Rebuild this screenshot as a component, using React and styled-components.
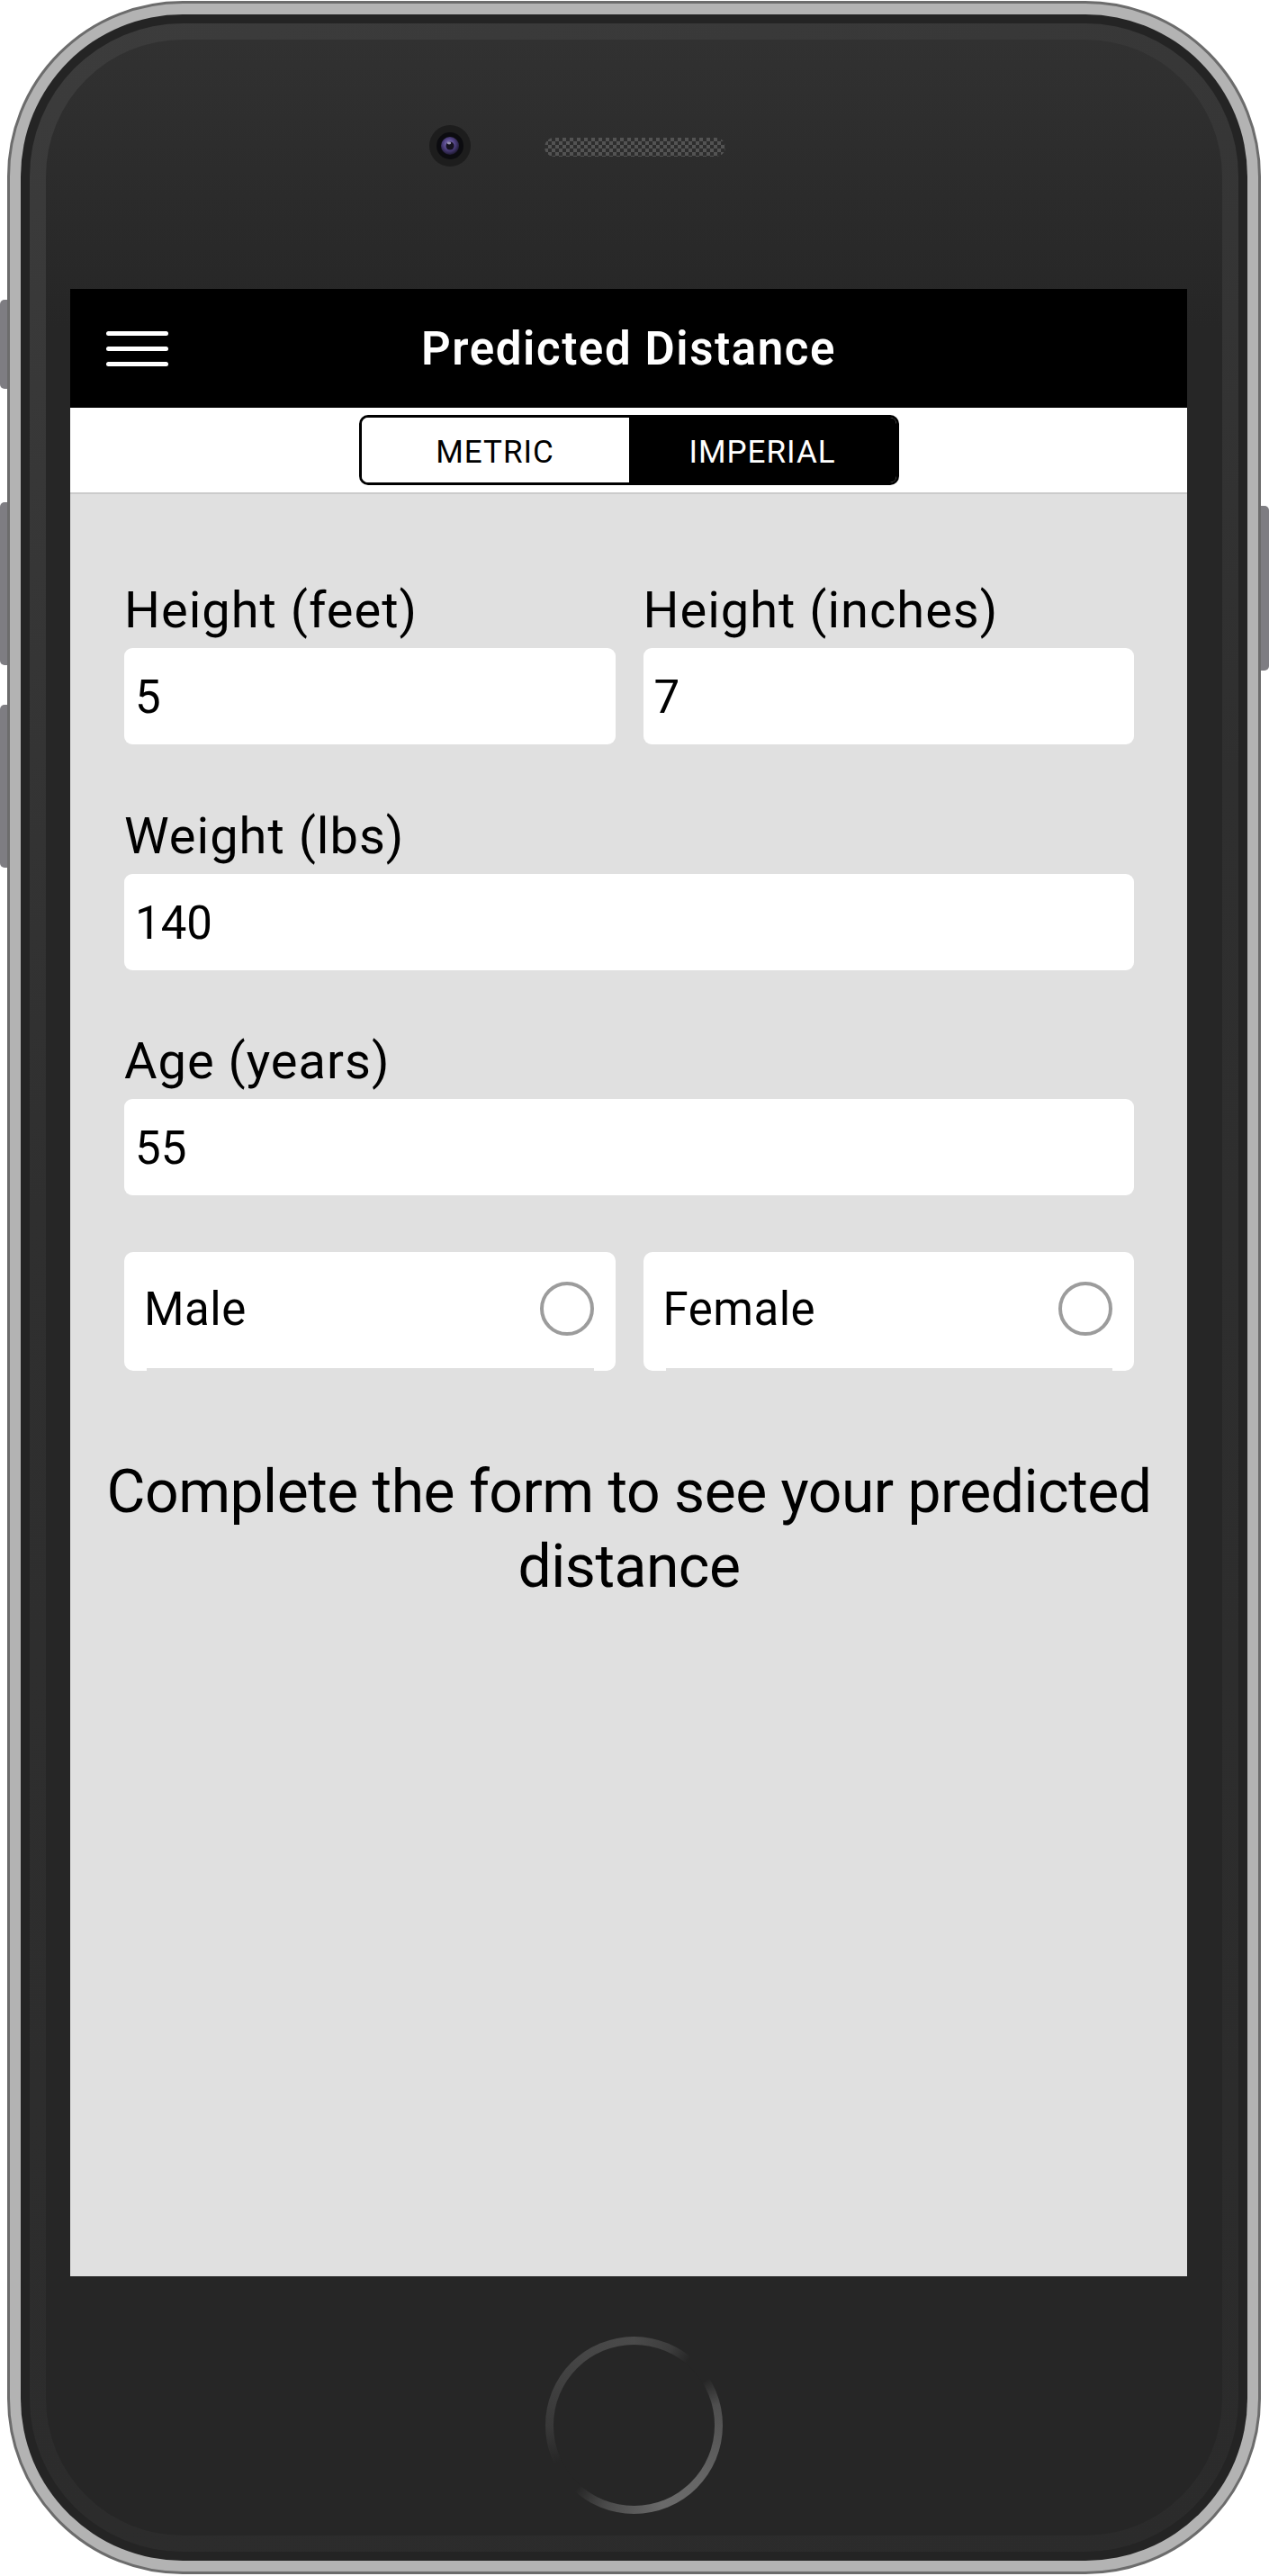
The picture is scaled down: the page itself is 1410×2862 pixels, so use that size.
import React, { useState } from 'react';
import styled, { createGlobalStyle } from 'styled-components';

const GlobalStyle = createGlobalStyle`
  html, body {
    margin: 0;
    padding: 0;
    background: #ffffff;
  }
  body {
    font-family: Roboto, "Liberation Sans", sans-serif;
  }
`;

const fieldRows = [
  {
    gap: 0,
    fields: [
      { label: 'Height (feet)', value: '5' },
      { label: 'Height (inches)', value: '7' },
    ],
  },
  { gap: 68, fields: [{ label: 'Weight (lbs)', value: '140' }] },
  { gap: 67, fields: [{ label: 'Age (years)', value: '55' }] },
];

function Camera() {
  return (
    <CameraSvg width="46" height="46" viewBox="0 0 46 46">
      <defs>
        <radialGradient id="lens" cx="45%" cy="40%" r="60%">
          <stop offset="0%" stopColor="#8a7bc0" />
          <stop offset="55%" stopColor="#4d3f7e" />
          <stop offset="100%" stopColor="#1f1a33" />
        </radialGradient>
      </defs>
      <circle cx="23" cy="23" r="23" fill="#1d1d1d" />
      <circle cx="23" cy="23" r="15" fill="#0c0c10" />
      <circle cx="23" cy="23" r="10" fill="url(#lens)" />
      <circle cx="23" cy="23" r="4.5" fill="#15121f" />
      <ellipse cx="22" cy="20" rx="2.2" ry="1.4" fill="#b9b3d6" opacity="0.8" />
    </CameraSvg>
  );
}

function App() {
  const [unit, setUnit] = useState('imperial');
  const [gender, setGender] = useState(null);

  return (
    <>
      <GlobalStyle />
      <Device>
        <Rail>
          <SideButton side="left" top={332} height={99} />
          <SideButton side="left" top={126} height={181} />
          <SideButton side="left" top={44} height={181} />
        </Rail>
        <Shell>
          <Rim>
            <Band>
              <Body>
                <TopArea>
                  <Camera />
                  <Speaker />
                </TopArea>
                <Screen>
                  <Header>
                    <Hamburger>
                      <Bar />
                      <Bar />
                      <Bar />
                    </Hamburger>
                    <Title>Predicted Distance</Title>
                    <span />
                  </Header>
                  <UnitBar>
                    <Segmented>
                      <Segment
                        active={unit === 'metric'}
                        onClick={() => setUnit('metric')}
                      >
                        METRIC
                      </Segment>
                      <Segment
                        active={unit === 'imperial'}
                        onClick={() => setUnit('imperial')}
                      >
                        IMPERIAL
                      </Segment>
                    </Segmented>
                  </UnitBar>
                  <Form>
                    {fieldRows.map((row, i) => (
                      <Row key={i} gap={row.gap} cols={row.fields.length}>
                        {row.fields.map((f) => (
                          <Field key={f.label}>
                            <Label>{f.label}</Label>
                            <Input defaultValue={f.value} />
                          </Field>
                        ))}
                      </Row>
                    ))}
                    <Row gap={63} cols={2}>
                      {['Male', 'Female'].map((g) => (
                        <Card key={g} onClick={() => setGender(g)}>
                          <span>{g}</span>
                          <Radio checked={gender === g} />
                        </Card>
                      ))}
                    </Row>
                    <Message>
                      Complete the form to see your predicted distance
                    </Message>
                  </Form>
                </Screen>
                <BottomArea>
                  <HomeRing>
                    <HomeFace />
                  </HomeRing>
                </BottomArea>
              </Body>
            </Band>
          </Rim>
        </Shell>
        <Rail>
          <SideButton side="right" top={561} height={183} />
        </Rail>
      </Device>
    </>
  );
}

export default App;

const Device = styled.div`
  width: 1410px;
  padding-top: 1px;
  display: flex;
  align-items: flex-start;
`;

const Rail = styled.div`
  display: flex;
  flex-direction: column;
  width: 8px;
  flex-shrink: 0;
`;

const SideButton = styled.div`
  width: ${({ side }) => (side === 'right' ? '9px' : '8px')};
  height: ${({ height }) => height}px;
  margin-top: ${({ top }) => top}px;
  background: #7e7d82;
  border-radius: ${({ side }) => (side === 'right' ? '0 5px 5px 0' : '5px 0 0 5px')};
`;

const Shell = styled.div`
  width: 1393px;
  height: 2859px;
  box-sizing: border-box;
  flex-shrink: 0;
  border: 3px solid #6c6c6c;
  border-radius: 195px;
  background: #b3b3b3;
  padding: 12px;
  display: flex;
`;

const Rim = styled.div`
  flex: 1;
  border-radius: 180px;
  background: #242424;
  padding: 10px;
  display: flex;
`;

const Band = styled.div`
  flex: 1;
  border-radius: 170px;
  background: linear-gradient(160deg, #3c3c3c 0%, #2f2f2f 40%, #2b2b2b 100%);
  padding: 18px;
  display: flex;
`;

const Body = styled.div`
  flex: 1;
  border-radius: 152px;
  background: linear-gradient(180deg, #313131 0px, #282828 260px, #262626 320px);
  display: flex;
  flex-direction: column;
  overflow: hidden;
`;

const TopArea = styled.div`
  height: 277px;
  box-sizing: border-box;
  padding: 95px 0 0 426px;
  display: flex;
  align-items: flex-start;
  gap: 82px;
`;

const CameraSvg = styled.svg`
  display: block;
  flex-shrink: 0;
`;

const Speaker = styled.div`
  width: 201px;
  height: 21px;
  margin-top: 14px;
  border-radius: 11px;
  background-color: #333;
  background-image: conic-gradient(#5a5a5a 25%, #2e2e2e 0 50%, #5a5a5a 0 75%, #2e2e2e 0);
  background-size: 8px 8px;
  opacity: 0.85;
`;

const Screen = styled.div`
  width: 1241px;
  height: 2208px;
  margin-left: 27px;
  background: #e0e0e0;
  display: flex;
  flex-direction: column;
  flex-shrink: 0;
`;

const Header = styled.div`
  height: 132px;
  background: #000;
  display: grid;
  grid-template-columns: 1fr auto 1fr;
  align-items: center;
  padding: 0 40px;
`;

const Hamburger = styled.div`
  width: 69px;
  display: flex;
  flex-direction: column;
  gap: 12px;
`;

const Bar = styled.span`
  display: block;
  height: 5px;
  border-radius: 3px;
  background: #fff;
`;

const Title = styled.h1`
  margin: 0;
  color: #fff;
  font-family: Roboto, "Liberation Sans", sans-serif;
  font-weight: 600;
  font-size: 51px;
  letter-spacing: 1.6px;
`;

const UnitBar = styled.div`
  height: 94px;
  background: #fff;
  border-bottom: 2px solid #cbcbcb;
  display: flex;
  align-items: center;
  justify-content: center;
`;

const Segmented = styled.div`
  width: 600px;
  height: 78px;
  box-sizing: border-box;
  border: 3px solid #000;
  border-radius: 10px;
  overflow: hidden;
  display: flex;
`;

const Segment = styled.div`
  flex: 1;
  display: flex;
  align-items: center;
  justify-content: center;
  padding-top: 5px;
  font-size: 35px;
  letter-spacing: 1px;
  cursor: pointer;
  background: ${({ active }) => (active ? '#000' : '#fff')};
  color: ${({ active }) => (active ? '#fff' : '#000')};
`;

const Form = styled.div`
  padding: 95px 59px 0 60px;
  display: flex;
  flex-direction: column;
`;

const Row = styled.div`
  display: grid;
  grid-template-columns: ${({ cols }) => (cols === 2 ? '1fr 1fr' : '1fr')};
  column-gap: 31px;
  margin-top: ${({ gap }) => gap}px;
`;

const Field = styled.div`
  display: flex;
  flex-direction: column;
`;

const Label = styled.label`
  font-size: 56px;
  line-height: 68px;
  letter-spacing: 1px;
  color: #000;
  margin-bottom: 8px;
`;

const Input = styled.input`
  height: 107px;
  box-sizing: border-box;
  width: 100%;
  border: none;
  outline: none;
  border-radius: 9px;
  background: #fff;
  padding: 2px 12px 0;
  font-family: Roboto, "Liberation Sans", sans-serif;
  font-size: 51px;
  color: #000;
`;

const Card = styled.div`
  position: relative;
  height: 132px;
  box-sizing: border-box;
  background: #fff;
  border-radius: 10px;
  display: flex;
  align-items: center;
  justify-content: space-between;
  padding: 0 24px 6px 22px;
  font-size: 51px;
  letter-spacing: 0.5px;
  color: #000;
  cursor: pointer;

  &::after {
    content: '';
    position: absolute;
    left: 25px;
    right: 24px;
    bottom: 0;
    height: 3px;
    background: #e0e0e0;
  }
`;

const Radio = styled.span`
  width: 60px;
  height: 60px;
  box-sizing: border-box;
  border-radius: 50%;
  border: 4.5px solid #9c9c9c;
  background: ${({ checked }) => (checked ? 'radial-gradient(circle, #000 0 14px, #fff 15px)' : '#fff')};
`;

const Message = styled.p`
  margin: 93px -30px 0;
  text-align: center;
  font-size: 66px;
  line-height: 83px;
  letter-spacing: -0.5px;
  color: #000;
`;

const BottomArea = styled.div`
  flex: 1;
  display: flex;
  justify-content: center;
  padding-top: 67px;
`;

const HomeRing = styled.div`
  width: 197px;
  height: 197px;
  box-sizing: border-box;
  padding: 9px;
  border-radius: 50%;
  background: conic-gradient(
    #4a4a4a 0deg,
    #3c3c3c 26deg,
    #262626 40deg,
    #262626 58deg,
    #4e4e4e 76deg,
    #666666 130deg,
    #6a6a6a 160deg,
    #4a4a4a 200deg,
    #262626 222deg,
    #262626 244deg,
    #383838 268deg,
    #454545 320deg,
    #4a4a4a 360deg
  );
`;

const HomeFace = styled.div`
  width: 100%;
  height: 100%;
  border-radius: 50%;
  background: #262626;
`;
